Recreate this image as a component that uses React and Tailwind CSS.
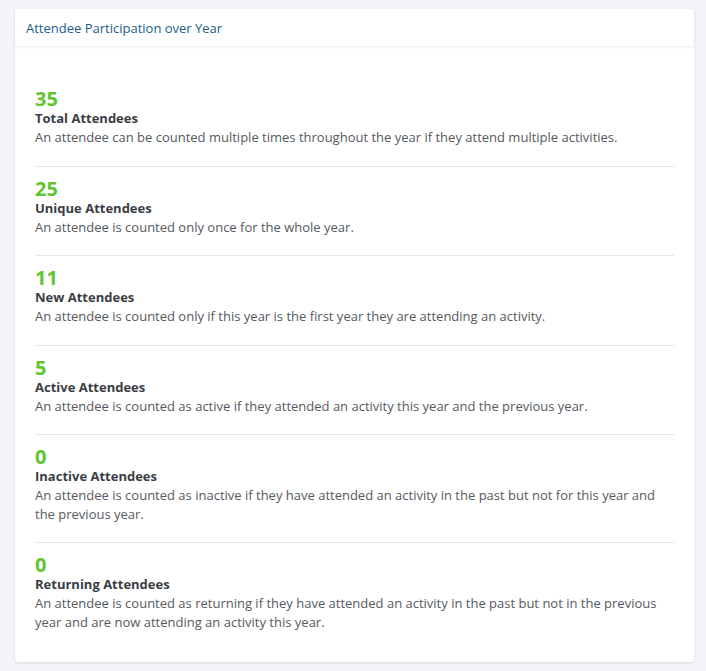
const stats = [
  {
    value: 35,
    title: "Total Attendees",
    desc: "An attendee can be counted multiple times throughout the year if they attend multiple activities.",
  },
  {
    value: 25,
    title: "Unique Attendees",
    desc: "An attendee is counted only once for the whole year.",
  },
  {
    value: 11,
    title: "New Attendees",
    desc: "An attendee is counted only if this year is the first year they are attending an activity.",
  },
  {
    value: 5,
    title: "Active Attendees",
    desc: "An attendee is counted as active if they attended an activity this year and the previous year.",
  },
  {
    value: 0,
    title: "Inactive Attendees",
    desc: "An attendee is counted as inactive if they have attended an activity in the past but not for this year and the previous year.",
  },
  {
    value: 0,
    title: "Returning Attendees",
    desc: "An attendee is counted as returning if they have attended an activity in the past but not in the previous year and are now attending an activity this year.",
  },
];

const App = () => {
  return (
    <div
      className="min-h-[671px] bg-[#f4f5f8] pt-[9px] pl-[15px] pr-[12px] pb-[10px]"
      style={{ fontFamily: '"Open Sans", "Liberation Sans", sans-serif' }}
    >
      <div className="bg-white rounded-[3px] shadow-[0_1px_3px_rgba(0,0,0,0.12)]">
        <div className="h-[38px] flex items-center pt-[2px] px-[11px] border-b border-[#f0f0f2] shadow-[0_1px_2px_rgba(0,0,0,0.03)]">
          <h2 className="text-[13px] text-[#1b5f88]">Attendee Participation over Year</h2>
        </div>

        <div className="px-[20px] pt-[30px] pb-[12px]">
          {stats.map((s, i) => (
            <div
              key={s.title}
              className={`pt-[11px] pb-[19px] ${i < stats.length - 1 ? "border-b border-[#e6e6e6]" : ""}`}
            >
              <div className="text-[20px] leading-[21px] font-bold text-[#60c531]">{s.value}</div>
              <div className="text-[13px] leading-[19px] font-bold text-[#3a3e44]">{s.title}</div>
              <p className="text-[13px] leading-[18.5px] text-[#555a60]">{s.desc}</p>
            </div>
          ))}
        </div>
      </div>
    </div>
  );
};

export default App;
